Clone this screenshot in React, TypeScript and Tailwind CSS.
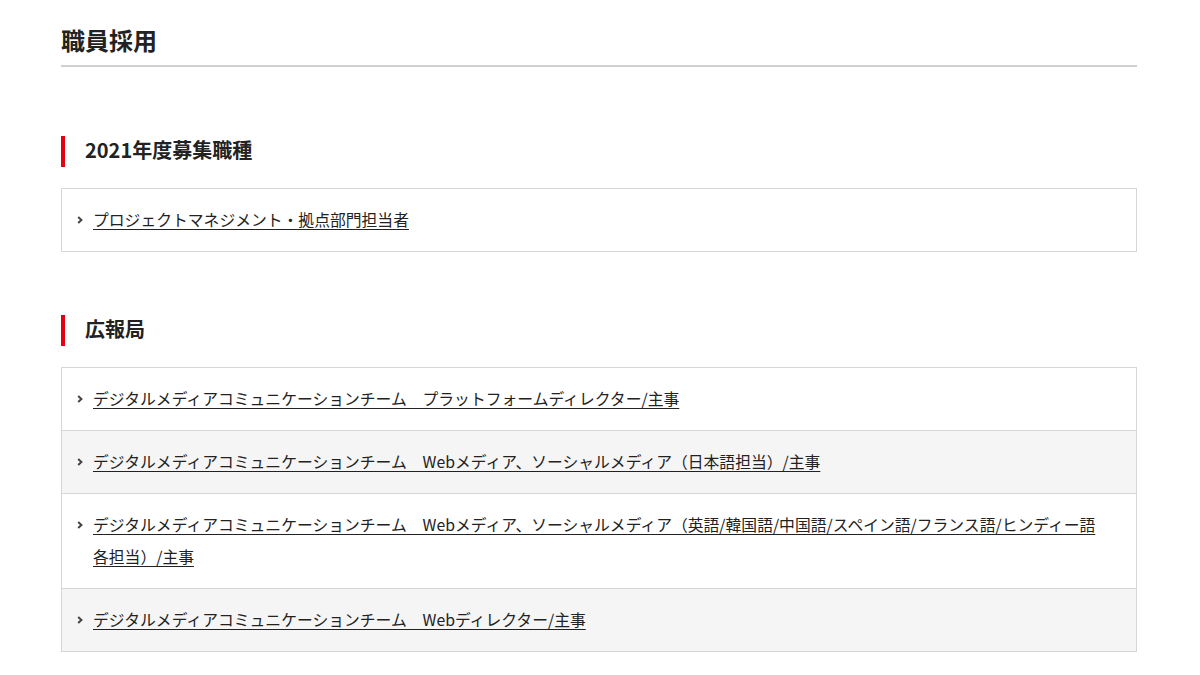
import React from 'react';

interface Section {
  title: string;
  items: string[];
}

const sections: Section[] = [
  {
    title: '2021年度募集職種',
    items: ['プロジェクトマネジメント・拠点部門担当者'],
  },
  {
    title: '広報局',
    items: [
      'デジタルメディアコミュニケーションチーム　プラットフォームディレクター/主事',
      'デジタルメディアコミュニケーションチーム　Webメディア、ソーシャルメディア（日本語担当）/主事',
      'デジタルメディアコミュニケーションチーム　Webメディア、ソーシャルメディア（英語/韓国語/中国語/スペイン語/フランス語/ヒンディー語各担当）/主事',
      'デジタルメディアコミュニケーションチーム　Webディレクター/主事',
    ],
  },
];

const Chevron = () => (
  <svg width="6" height="32" viewBox="0 0 6 32" className="shrink-0">
    <path d="M1.2 13 L4.4 16 L1.2 19" fill="none" stroke="#444" strokeWidth="2" />
  </svg>
);

const App: React.FC = () => {
  return (
    <div
      className="min-h-[675px] bg-white text-[#222]"
      style={{ fontFamily: '"Noto Sans CJK JP", "Noto Sans", sans-serif' }}
    >
      <div className="ml-[61px] w-[1076px] pt-[22px]">
        {/* page title */}
        <h1 className="text-[24px] font-bold leading-[36px] pb-[7px] border-b-2 border-[#d0d0d0]">
          職員採用
        </h1>

        {sections.map((section, i) => (
          <section key={section.title} className={i === 0 ? 'mt-[69px]' : 'mt-[63px]'}>
            <h2 className="border-l-4 border-[#e60012] pl-[20px] pb-[3px] text-[20px] font-bold leading-[28px]">
              {section.title}
            </h2>
            <ul className="mt-[21px] border border-[#d6d6d6]">
              {section.items.map((item, j) => (
                <li
                  key={item}
                  className={`flex gap-[10px] pl-[15px] pr-[40px] py-[15px] ${
                    j > 0 ? 'border-t border-[#d6d6d6]' : ''
                  } ${j % 2 === 1 ? 'bg-[#f5f5f5]' : 'bg-white'}`}
                >
                  <Chevron />
                  <a href="#" className="text-[15.8px] leading-8 underline underline-offset-[3px] text-[#222]">
                    {item}
                  </a>
                </li>
              ))}
            </ul>
          </section>
        ))}
      </div>
    </div>
  );
};

export default App;
